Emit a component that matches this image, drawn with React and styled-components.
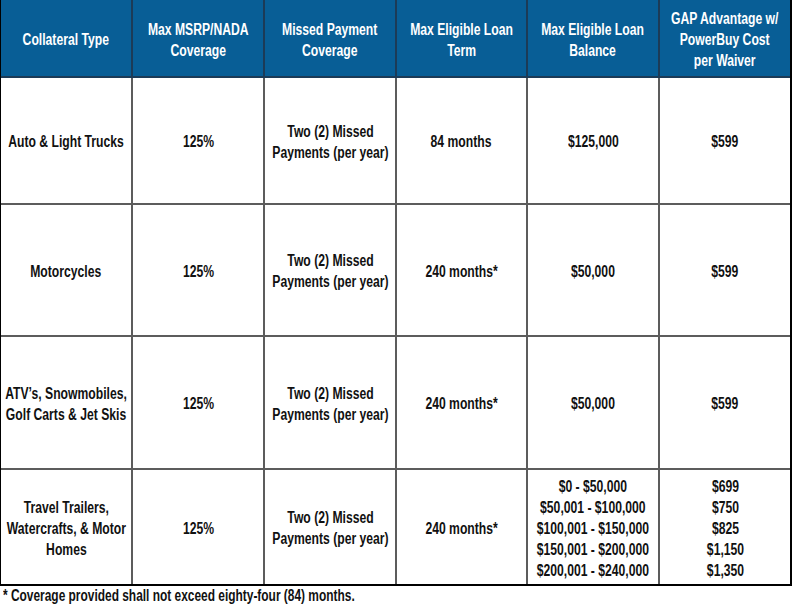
import React from "react";
import styled, { createGlobalStyle } from "styled-components";

const Global = createGlobalStyle`
  html, body { margin: 0; padding: 0; background: #ffffff; }
  body {
    font-family: "Liberation Sans", Arial, sans-serif;
    font-weight: 700;
  }
  * { box-sizing: border-box; }
`;

const Page = styled.div`
  width: 792px;
  height: 612px;
  display: flex;
  flex-direction: column;
  overflow: hidden;
`;

const Table = styled.div`
  width: 792px;
  display: grid;
  grid-template-columns: 132px 132px 132px 131px 132px 130px;
  grid-template-rows: 78px 127px 132px 133px 114px;
  border-left: 1px solid #000;
  border-right: 2px solid #000;
  border-bottom: 2px solid #000;
`;

const CellBase = styled.div`
  display: flex;
  flex-direction: column;
  align-items: center;
  justify-content: center;
  min-width: 0;
  border-right: 2px solid;
  &:nth-child(6n) { border-right: none; }
`;

const HeadCell = styled(CellBase)`
  background: #085e96;
  color: #ffffff;
  border-color: #1c3b57;
  border-bottom: 2px solid #1c3b57;
  padding-top: 3px;
`;

const Cell = styled(CellBase)`
  color: #111111;
  border-color: #5c5c5c;
  border-bottom: ${(p) => (p.$last ? "none" : "2px solid #5c5c5c")};
  padding-top: 2px;
`;

const Condensed = styled.span`
  display: block;
  white-space: nowrap;
  text-align: center;
  font-size: 16px;
  line-height: 21px;
  transform: scaleX(0.76);
  transform-origin: center;
`;

const Footnote = styled.div`
  color: #111111;
  padding-left: 3px;
`;

const FootText = styled.span`
  display: block;
  white-space: nowrap;
  font-size: 16px;
  line-height: 20px;
  transform: scaleX(0.745);
  transform-origin: left center;
`;

const headers = [
  ["Collateral Type"],
  ["Max MSRP/NADA", "Coverage"],
  ["Missed Payment", "Coverage"],
  ["Max Eligible Loan", "Term"],
  ["Max Eligible Loan", "Balance"],
  ["GAP Advantage w/", "PowerBuy Cost", "per Waiver"],
];

const rows = [
  { type: ["Auto & Light Trucks"], term: "84 months", bal: ["$125,000"], cost: ["$599"] },
  { type: ["Motorcycles"], term: "240 months*", bal: ["$50,000"], cost: ["$599"] },
  { type: ["ATV’s, Snowmobiles,", "Golf Carts & Jet Skis"], term: "240 months*", bal: ["$50,000"], cost: ["$599"] },
  {
    type: ["Travel Trailers,", "Watercrafts, & Motor", "Homes"],
    term: "240 months*",
    bal: ["$0 - $50,000", "$50,001 - $100,000", "$100,001 - $150,000", "$150,001 - $200,000", "$200,001 - $240,000"],
    cost: ["$699", "$750", "$825", "$1,150", "$1,350"],
  },
];

const Lines = ({ items }) => (
  <Condensed>
    {items.map((t, i) => (
      <React.Fragment key={i}>
        {i > 0 && <br />}
        {t}
      </React.Fragment>
    ))}
  </Condensed>
);

export default function App() {
  return (
    <Page>
      <Global />
      <Table>
        {headers.map((h, i) => (
          <HeadCell key={"h" + i}>
            <Lines items={h} />
          </HeadCell>
        ))}
        {rows.map((r, i) => {
          const last = i === rows.length - 1;
          const cells = [
            r.type,
            ["125%"],
            ["Two (2) Missed", "Payments (per year)"],
            [r.term],
            r.bal,
            r.cost,
          ];
          return cells.map((c, j) => (
            <Cell key={i + "-" + j} $last={last}>
              <Lines items={c} />
            </Cell>
          ));
        })}
      </Table>
      <Footnote>
        <FootText>* Coverage provided shall not exceed eighty-four (84) months.</FootText>
      </Footnote>
    </Page>
  );
}
